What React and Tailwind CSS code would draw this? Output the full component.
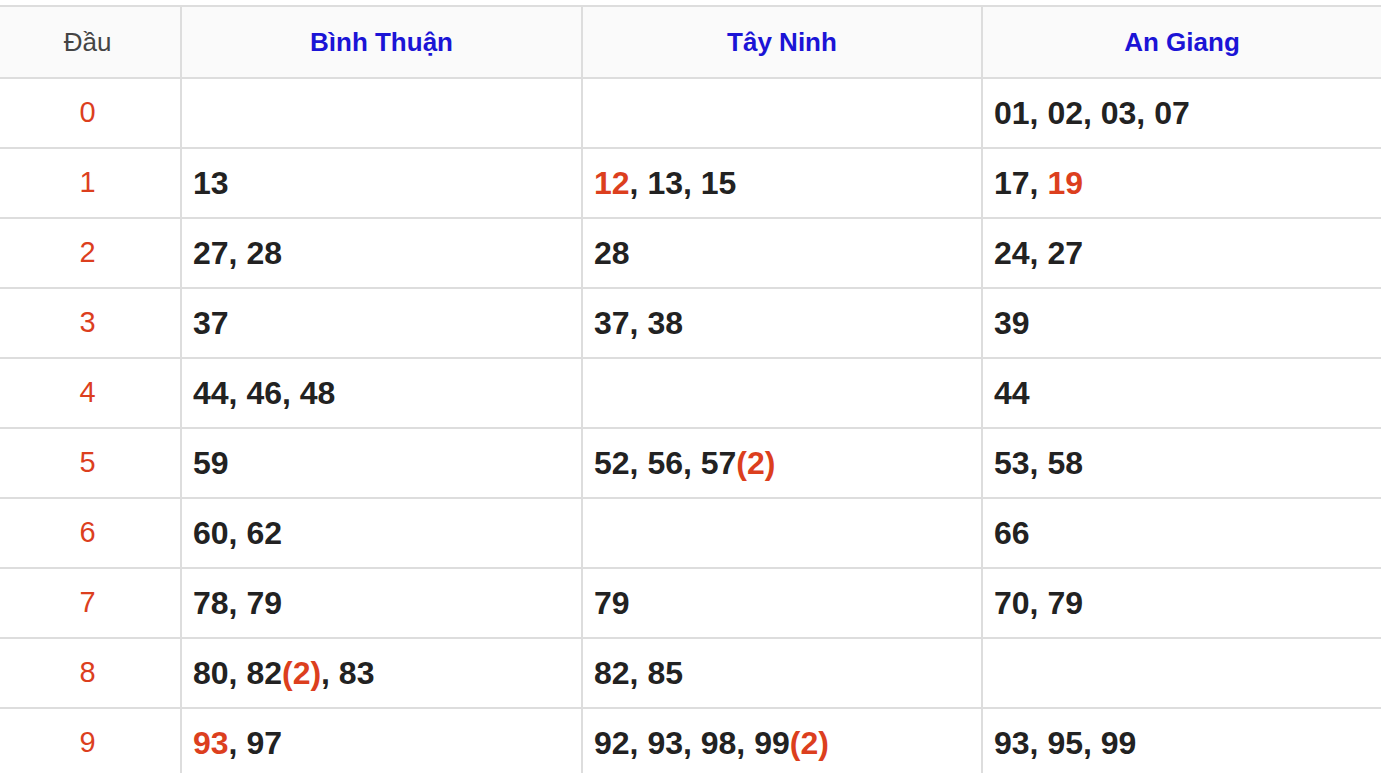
import React from 'react';

const provinces = ['Bình Thuận', 'Tây Ninh', 'An Giang'];

// each cell: list of [number, hot, count]
const rows = [
  [[], [], [['01'], ['02'], ['03'], ['07']]],
  [[['13']], [['12', true], ['13'], ['15']], [['17'], ['19', true]]],
  [[['27'], ['28']], [['28']], [['24'], ['27']]],
  [[['37']], [['37'], ['38']], [['39']]],
  [[['44'], ['46'], ['48']], [], [['44']]],
  [[['59']], [['52'], ['56'], ['57', false, 2]], [['53'], ['58']]],
  [[['60'], ['62']], [], [['66']]],
  [[['78'], ['79']], [['79']], [['70'], ['79']]],
  [[['80'], ['82', false, 2], ['83']], [['82'], ['85']], []],
  [[['93', true], ['97']], [['92'], ['93'], ['98'], ['99', false, 2]], [['93'], ['95'], ['99']]],
];

function NumberList({ items }) {
  return (
    <span>
      {items.map(([num, hot, count], i) => (
        <React.Fragment key={i}>
          {i > 0 && ', '}
          <span className={hot ? 'text-[#dc3f1e]' : ''}>{num}</span>
          {count && <span className="text-[#dc3f1e]">({count})</span>}
        </React.Fragment>
      ))}
    </span>
  );
}

export default function App() {
  return (
    <div className="bg-white pt-[5px] min-h-screen" style={{ fontFamily: '"Liberation Sans", Arial, sans-serif' }}>
      <div className="grid grid-cols-[182px_401px_400px_1fr]">
        {/* Header */}
        <div className="h-[74px] flex items-center justify-center pr-[5px] bg-[#fafafa] border-t-2 border-b-2 border-r-2 border-[#dddddd] text-[26px] text-[#444444]">
          Đầu
        </div>
        {provinces.map((p, i) => (
          <div
            key={p}
            className={`h-[74px] flex items-center justify-center bg-[#fafafa] border-t-2 border-b-2 border-[#dddddd] text-[26px] font-bold text-[#1b14d6] ${i < 2 ? 'border-r-2' : ''}`}
          >
            {p}
          </div>
        ))}

        {/* Body */}
        {rows.map((cells, r) => (
          <React.Fragment key={r}>
            <div className="h-[70px] flex items-center justify-center pr-[5px] border-b-2 border-r-2 border-[#dddddd] text-[29px] text-[#dc3f1e]">
              {r}
            </div>
            {cells.map((items, c) => (
              <div
                key={c}
                className={`h-[70px] flex items-center pl-[11px] border-b-2 border-[#dddddd] text-[32px] font-bold text-[#222222] whitespace-nowrap ${c < 2 ? 'border-r-2' : ''}`}
              >
                <NumberList items={items} />
              </div>
            ))}
          </React.Fragment>
        ))}
      </div>
    </div>
  );
}
